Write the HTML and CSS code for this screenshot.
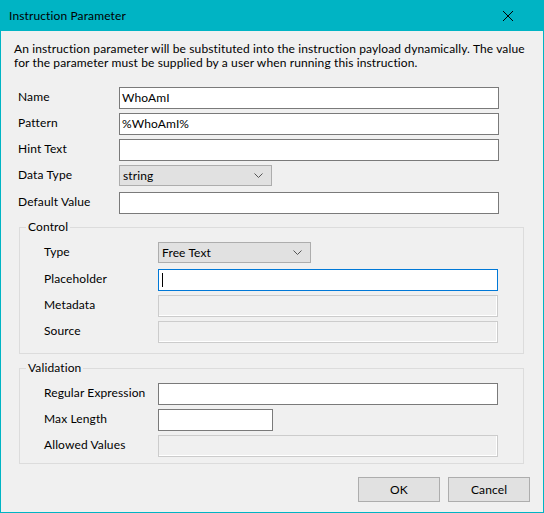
FILE: index.html
```html
<!DOCTYPE html>
<html>
<head>
<meta charset="utf-8">
<link rel="stylesheet" href="styles.css">
</head>
<body>
<div class="window">
  <div class="titlebar">
    <span class="title">Instruction Parameter</span>
    <svg class="close" width="12" height="12" viewBox="0 0 12 12"><path d="M1 1 L11 11 M11 1 L1 11" stroke="#000" stroke-width="1" fill="none"/></svg>
  </div>
  <div class="body">
    <p class="desc">An instruction parameter will be substituted into the instruction payload dynamically. The value<br>for the parameter must be supplied by a user when running this instruction.</p>

    <div class="form main">
      <div class="row"><span class="label">Name</span><div class="textbox">WhoAmI</div></div>
      <div class="row"><span class="label">Pattern</span><div class="textbox">%WhoAmI%</div></div>
      <div class="row"><span class="label">Hint Text</span><div class="textbox"></div></div>
      <div class="row row-select"><span class="label">Data Type</span><div class="select dt"><span>string</span><svg class="chev" width="9" height="5" viewBox="0 0 9 5"><path d="M0.5 0.5 L4.5 4.5 L8.5 0.5" stroke="#555" fill="none"/></svg></div></div>
      <div class="row"><span class="label">Default Value</span><div class="textbox"></div></div>
    </div>

    <fieldset class="group control">
      <legend>Control</legend>
      <div class="form sub">
        <div class="row row-select"><span class="label">Type</span><div class="select ty"><span>Free Text</span><svg class="chev" width="9" height="5" viewBox="0 0 9 5"><path d="M0.5 0.5 L4.5 4.5 L8.5 0.5" stroke="#555" fill="none"/></svg></div></div>
        <div class="row"><span class="label">Placeholder</span><div class="textbox focused"><span class="caret"></span></div></div>
        <div class="row"><span class="label">Metadata</span><div class="textbox disabled"></div></div>
        <div class="row"><span class="label">Source</span><div class="textbox disabled"></div></div>
      </div>
    </fieldset>

    <fieldset class="group validation">
      <legend>Validation</legend>
      <div class="form sub">
        <div class="row"><span class="label">Regular Expression</span><div class="textbox"></div></div>
        <div class="row"><span class="label">Max Length</span><div class="textbox short"></div></div>
        <div class="row"><span class="label">Allowed Values</span><div class="textbox disabled"></div></div>
      </div>
    </fieldset>

    <div class="buttons">
      <button class="btn">OK</button>
      <button class="btn">Cancel</button>
    </div>
  </div>
</div>
</body>
</html>
```
FILE: styles.css
```css
html, body {
  margin: 0;
  padding: 0;
  background: #f0f0f0;
}
body {
  font-family: Lato, "Noto Sans", sans-serif;
  font-size: 12px;
  letter-spacing: 0.12px;
  color: #000;
}
.window {
  width: 544px;
  height: 513px;
  box-sizing: border-box;
  border: 1px solid #00b4c4;
  border-top: 0;
  background: #f0f0f0;
  display: flex;
  flex-direction: column;
}
.titlebar {
  height: 31px;
  margin: 0 -1px;
  background: #00b4c4;
  display: flex;
  align-items: center;
  justify-content: space-between;
  padding: 0 30px 0 9px;
  flex: none;
}
.title {
  font-size: 12px;
  line-height: 14px;
}
.close {
  display: block;
  margin-top: 1px;
}
.body {
  flex: 1;
  display: flex;
  flex-direction: column;
}
.desc {
  margin: 11px 0 0 13px;
  line-height: 14px;
  white-space: nowrap;
}
.form {
  display: flex;
  flex-direction: column;
}
.main {
  margin: 17px 0 0 17px;
}
.sub {
  padding: 0 25px 0 24px;
}
.row {
  display: flex;
  align-items: center;
  margin-bottom: 4px;
}
.row:last-child {
  margin-bottom: 0;
}
.row-select {
  margin-bottom: 6px;
}
.label {
  padding-bottom: 3px;
}
.main .label {
  width: 101px;
}
.sub .label {
  width: 114px;
}
.textbox {
  box-sizing: border-box;
  width: 380px;
  height: 22px;
  border: 1px solid #7a7a7a;
  background: #fff;
  padding: 0 2px 2px;
  display: flex;
  align-items: center;
}
.sub .textbox {
  width: 342px;
}
.sub .textbox.short {
  width: 115px;
}
.textbox.focused {
  border-color: #0078d7;
  padding-bottom: 0;
}
.textbox.disabled {
  border-color: #cccccc;
  background: #f0f0f0;
  box-shadow: inset -1px -1px 0 #fff;
}
.caret {
  width: 1px;
  height: 14px;
  background: #000;
  margin-left: 1px;
}
.select {
  box-sizing: border-box;
  height: 21px;
  border: 1px solid #adadad;
  background: #e1e1e1;
  display: flex;
  align-items: center;
  justify-content: space-between;
  padding: 0 8px 0 3px;
}
.select span {
  padding-bottom: 1px;
}
.select.dt { width: 153px; }
.select.ty { width: 153px; }
.chev { display: block; }
.group {
  border: 1px solid #dcdcdc;
  margin: 0 19px 0 18px;
  padding: 8px 0 10px;
  min-width: 0;
}
.group legend {
  padding: 0 2px 1px;
  margin-left: 6px;
  line-height: 13px;
}
.control {
  margin-top: 6px;
}
.validation {
  margin-top: 7px;
  padding-bottom: 6px;
}
.buttons {
  display: flex;
  justify-content: flex-end;
  gap: 8px;
  margin: 13px 13px 0 0;
}
.btn {
  width: 82px;
  height: 25px;
  box-sizing: border-box;
  border: 1px solid #adadad;
  background: #e1e1e1;
  font-family: inherit;
  font-size: 12px;
  letter-spacing: 0.12px;
  color: #000;
  padding: 0 0 1px;
}
```
